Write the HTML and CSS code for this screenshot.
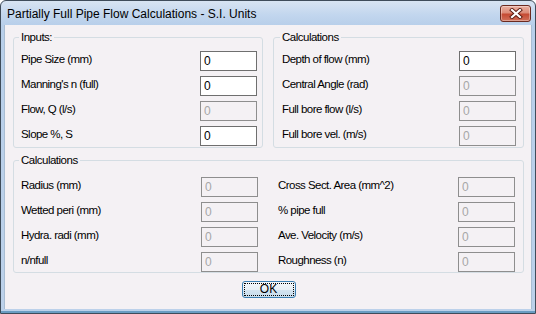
FILE: index.html
```html
<!DOCTYPE html>
<html>
<head>
<meta charset="utf-8">
<link rel="stylesheet" href="styles.css">
</head>
<body>
<div class="window">
  <div class="titlebar">
    <span class="title">Partially Full Pipe Flow Calculations - S.I. Units</span>
    <button class="close" aria-label="Close">
      <svg width="14" height="11" viewBox="0 0 14 11">
        <path d="M3 2 L11 9 M11 2 L3 9" stroke="#5a1a10" stroke-width="4" stroke-linecap="square"/>
        <path d="M3 2 L11 9 M11 2 L3 9" stroke="#ffffff" stroke-width="2.2" stroke-linecap="square"/>
      </svg>
    </button>
  </div>
  <div class="client">
    <div class="top">
      <fieldset class="group inputs">
        <legend>Inputs:</legend>
        <div class="rows">
          <div class="row"><span class="lbl">Pipe Size (mm)</span><input class="field" value="0"></div>
          <div class="row"><span class="lbl">Manning's n (full)</span><input class="field" value="0"></div>
          <div class="row"><span class="lbl">Flow, Q (l/s)</span><input class="field" value="0" disabled></div>
          <div class="row"><span class="lbl">Slope %, S</span><input class="field" value="0"></div>
        </div>
      </fieldset>
      <fieldset class="group calc">
        <legend>Calculations</legend>
        <div class="rows">
          <div class="row"><span class="lbl">Depth of flow (mm)</span><input class="field" value="0"></div>
          <div class="row"><span class="lbl">Central Angle (rad)</span><input class="field" value="0" disabled></div>
          <div class="row"><span class="lbl">Full bore flow (l/s)</span><input class="field" value="0" disabled></div>
          <div class="row"><span class="lbl">Full bore vel. (m/s)</span><input class="field" value="0" disabled></div>
        </div>
      </fieldset>
    </div>
    <fieldset class="group wide">
      <legend>Calculations</legend>
      <div class="grid">
        <div class="row"><span class="lbl">Radius (mm)</span><input class="field" value="0" disabled></div>
        <div class="row"><span class="lbl">Cross Sect. Area (mm^2)</span><input class="field" value="0" disabled></div>
        <div class="row"><span class="lbl">Wetted peri (mm)</span><input class="field" value="0" disabled></div>
        <div class="row"><span class="lbl">% pipe full</span><input class="field" value="0" disabled></div>
        <div class="row"><span class="lbl">Hydra. radi (mm)</span><input class="field" value="0" disabled></div>
        <div class="row"><span class="lbl">Ave. Velocity (m/s)</span><input class="field" value="0" disabled></div>
        <div class="row"><span class="lbl">n/nfull</span><input class="field" value="0" disabled></div>
        <div class="row"><span class="lbl">Roughness (n)</span><input class="field" value="0" disabled></div>
      </div>
    </fieldset>
    <div class="actions">
      <button class="ok"><span class="focus">OK</span></button>
    </div>
  </div>
</div>
</body>
</html>
```

FILE: styles.css
```css
* { box-sizing: border-box; }
html, body { margin: 0; padding: 0; }
body {
  width: 536px;
  height: 314px;
  overflow: hidden;
  background: #ffffff;
  font-family: "Liberation Sans", Arial, sans-serif;
}
.window {
  width: 536px;
  height: 314px;
  border: 1px solid #3f4c5a;
  border-radius: 6px 6px 0 0;
  background: linear-gradient(#d8e4f2 0, #c2d6ee 14px, #b8cfea 24px, #bcd1ea 100%);
  display: flex;
  flex-direction: column;
  box-shadow: inset 0 -2px 0 #6a9cc2;
}
.titlebar {
  height: 24px;
  flex: none;
  display: flex;
  align-items: flex-start;
  justify-content: space-between;
  padding: 0 4px 0 6px;
}
.title {
  font-size: 12px;
  line-height: 14px;
  padding-top: 6px;
  color: #000;
}
.close {
  margin-top: 4px;
  width: 31px;
  height: 17px;
  padding: 0;
  border: 1px solid #6b2a20;
  border-radius: 3px;
  background: linear-gradient(#eab0a2 0, #dc8b78 45%, #c54a33 55%, #d0705a 100%);
  box-shadow: inset 0 0 0 1px rgba(255,255,255,0.35);
  display: flex;
  align-items: center;
  justify-content: center;
}
.client {
  flex: 1;
  margin: 0 3px 4px 3px;
  background: #f4f1f4;
  padding: 6px 7px 0 8px;
  display: flex;
  flex-direction: column;
  border-left: 1px solid #a9bdd2;
  border-right: 1px solid #a9bdd2;
}
.top {
  display: flex;
  gap: 10px;
}
.group {
  margin: 0;
  min-width: 0;
  border: 1px solid #d4dde3;
  border-radius: 3px;
  font-size: 11px;
}
.group legend {
  padding: 0 2px;
  margin-left: -2px;
  line-height: 12px;
  font-size: 11.5px;
  letter-spacing: -0.5px;
  color: #000;
}
.inputs {
  width: 251px;
  padding: 8px 5px 1px 7px;
}
.calc {
  width: 252px;
  padding: 8px 7px 1px 8px;
}
.wide {
  margin-top: 6px;
  padding: 11px 8px 0 7px;
}
.rows {
  display: flex;
  flex-direction: column;
  gap: 5px;
}
.grid {
  display: grid;
  grid-template-columns: 1fr 1fr;
  column-gap: 20px;
  row-gap: 5px;
}
.row {
  display: flex;
  align-items: center;
  justify-content: space-between;
  height: 20px;
}
.lbl {
  font-size: 11.5px;
  letter-spacing: -0.55px;
  line-height: 13px;
  margin-bottom: 4px;
  color: #000;
  white-space: nowrap;
}
.field {
  width: 57px;
  height: 20px;
  margin: 0;
  padding: 0 0 0 3px;
  border: 1px solid #6f6f6f;
  border-radius: 0;
  background: #ffffff;
  font-family: "Liberation Sans", Arial, sans-serif;
  font-size: 12px;
  color: #000;
  outline: none;
}
.field:disabled {
  background: #f4f1f4;
  border-color: #8e8e8e;
  color: #a7a7a7;
}
.actions {
  display: flex;
  justify-content: center;
  margin-top: 8px;
}
.ok {
  width: 54px;
  height: 17px;
  padding: 1px;
  border: 1px solid #3c7fb1;
  border-radius: 3px;
  background: linear-gradient(#f4f8fb 0, #e8f0f6 50%, #d4e4f0 51%, #c6dcec 100%);
  font-family: "Liberation Sans", Arial, sans-serif;
  font-size: 12px;
  color: #000;
  display: flex;
}
.focus {
  flex: 1;
  border: 1px dotted #000;
  display: flex;
  align-items: center;
  justify-content: center;
  line-height: 11px;
}
```
